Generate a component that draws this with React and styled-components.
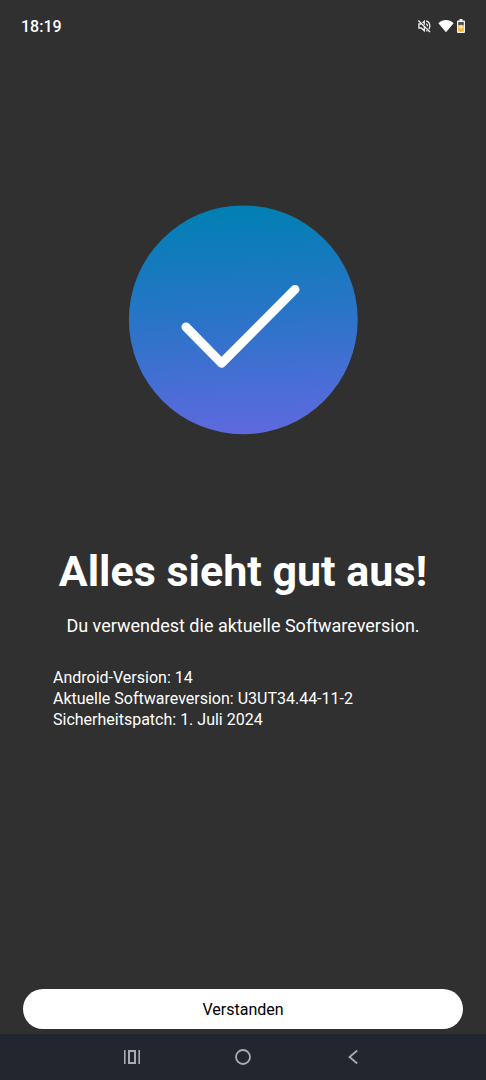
import React from "react";
import styled, { createGlobalStyle } from "styled-components";

const GlobalStyle = createGlobalStyle`
  *, *::before, *::after { box-sizing: border-box; }
  body {
    margin: 0;
    background: #303030;
    color: #ffffff;
    font-family: Roboto, "Noto Sans", sans-serif;
  }
`;

const Screen = styled.div`
  display: flex;
  flex-direction: column;
  min-height: 100vh;
  background: #303030;
`;

const StatusBar = styled.header`
  display: flex;
  align-items: center;
  justify-content: space-between;
  height: 52px;
  padding: 0 21px;
`;

const Clock = styled.time`
  padding-top: 2px;
  font-size: 16px;
  line-height: 20px;
  font-weight: 500;
`;

const StatusIcons = styled.div`
  display: flex;
  align-items: center;
`;

const StatusGlyph = styled.span`
  display: flex;
  margin-left: ${(p) => p.$gap}px;
`;

const Content = styled.main`
  flex: 1;
  display: flex;
  flex-direction: column;
  align-items: center;
  padding: 153px 24px 24px;
`;

const SuccessMark = styled.svg`
  display: block;
  width: 230px;
  height: 230px;
`;

const Title = styled.h1`
  margin: 111px 0 0;
  font-size: 43px;
  line-height: 50px;
  font-weight: 700;
  text-align: center;
`;

const Summary = styled.p`
  margin: 19px 0 0;
  font-size: 18px;
  line-height: 21px;
  text-align: center;
`;

const Details = styled.ul`
  align-self: stretch;
  margin: 31px 0 0;
  padding: 0 29px;
  list-style: none;
  font-size: 16px;
  line-height: 21px;
`;

const Actions = styled.footer`
  display: flex;
  padding: 0 23px 5px;
`;

const PrimaryButton = styled.button`
  flex: 1;
  height: 40px;
  padding: 2px 16px 0;
  border: 0;
  border-radius: 20px;
  background: #ffffff;
  color: #000000;
  font-family: inherit;
  font-size: 16px;
  line-height: 20px;
  cursor: pointer;
`;

const NavBar = styled.nav`
  display: flex;
  align-items: center;
  justify-content: center;
  gap: 86px;
  height: 46px;
  background: #23262f;
`;

const NavButton = styled.button`
  display: flex;
  align-items: center;
  justify-content: center;
  width: 24px;
  height: 24px;
  padding: 0;
  border: 0;
  background: none;
  color: #a9abaf;
  cursor: pointer;
`;

const details = [
  ["Android-Version", "14"],
  ["Aktuelle Softwareversion", "U3UT34.44-11-2"],
  ["Sicherheitspatch", "1. Juli 2024"],
];

function MutedIcon() {
  return (
    <svg width="14" height="14" viewBox="0 0 14 14" fill="none" stroke="#eeeeee" strokeWidth="1.3" aria-hidden="true">
      <path d="M1.300 1.500 13 13" />
      <path d="M4.500 5H1.900v4h2.300L7.300 11.800V7.600M5.500 3.900 7.300 2.200v3.600" />
      <path d="M9.200 4.700c.9.5 1.300 1.300 1.300 2.500M9.100 1.800c2.300.7 3.700 2.700 3.700 5.200 0 1.200-.3 2.200-.9 3M9.300 12.200l1-.5" />
    </svg>
  );
}

function WifiIcon() {
  return (
    <svg width="16" height="14" viewBox="0 0 16 14" aria-hidden="true">
      <path d="M.4 4.200C2.600 2.100 5.200 1 8 1s5.400 1.100 7.600 3.200L8 13.200z" fill="#ffffff" />
    </svg>
  );
}

function BatteryIcon() {
  return (
    <svg width="8" height="14" viewBox="0 0 8 14" aria-hidden="true">
      <path d="M2.500 0h3v1.500H7a1 1 0 0 1 1 1V13a1 1 0 0 1-1 1H1a1 1 0 0 1-1-1V2.500a1 1 0 0 1 1-1h1.500z" fill="#f2f2f2" />
      <path d="M1.200 3h5.600v3H1.200z" fill="#50504c" />
      <path d="M1.200 6h5.600v6.700H1.200z" fill="#f6b32b" />
      <path d="M3.500 5.800h1v1.700H6v1H4.500v1.500h-1V8.500H2v-1h1.500z" fill="#fff6dc" />
    </svg>
  );
}

export default function App() {
  return (
    <Screen>
      <GlobalStyle />
      <StatusBar>
        <Clock>18:19</Clock>
        <StatusIcons>
          <StatusGlyph $gap={0}><MutedIcon /></StatusGlyph>
          <StatusGlyph $gap={7}><WifiIcon /></StatusGlyph>
          <StatusGlyph $gap={3}><BatteryIcon /></StatusGlyph>
        </StatusIcons>
      </StatusBar>

      <Content>
        <SuccessMark viewBox="0 0 230 230" aria-hidden="true">
          <defs>
            <linearGradient id="success-fill" x1="0.47" y1="0" x2="0.53" y2="1">
              <stop offset="0" stopColor="#0080b3" />
              <stop offset="0.5" stopColor="#2b74c8" />
              <stop offset="1" stopColor="#5f69df" />
            </linearGradient>
          </defs>
          <circle cx="115.3" cy="114.8" r="114.4" fill="url(#success-fill)" />
          <path
            d="M58 122 93.500 158.200 167 84.400"
            fill="none"
            stroke="#ffffff"
            strokeWidth="9"
            strokeLinecap="round"
            strokeLinejoin="round"
          />
        </SuccessMark>
        <Title>Alles sieht gut aus!</Title>
        <Summary>Du verwendest die aktuelle Softwareversion.</Summary>
        <Details>
          {details.map(([label, value]) => (
            <li key={label}>{label}: {value}</li>
          ))}
        </Details>
      </Content>

      <Actions>
        <PrimaryButton type="button">Verstanden</PrimaryButton>
      </Actions>

      <NavBar aria-label="System">
        <NavButton type="button" aria-label="Letzte Apps">
          <svg width="18" height="14" viewBox="0 0 18 14" fill="none" stroke="currentColor" aria-hidden="true">
            <path d="M.8 0v14M15.200 0v14" strokeWidth="1.600" />
            <path d="M5 1h6v12H5z" strokeWidth="2" />
          </svg>
        </NavButton>
        <NavButton type="button" aria-label="Startbildschirm">
          <svg width="16" height="16" viewBox="0 0 16 16" fill="none" stroke="currentColor" aria-hidden="true">
            <circle cx="8" cy="8" r="7" strokeWidth="1.800" />
          </svg>
        </NavButton>
        <NavButton type="button" aria-label="Zurück">
          <svg width="10" height="14" viewBox="0 0 10 14" fill="none" stroke="currentColor" aria-hidden="true">
            <path d="M9.200.5 1.500 7l7.700 6.500" strokeWidth="1.800" />
          </svg>
        </NavButton>
      </NavBar>
    </Screen>
  );
}
